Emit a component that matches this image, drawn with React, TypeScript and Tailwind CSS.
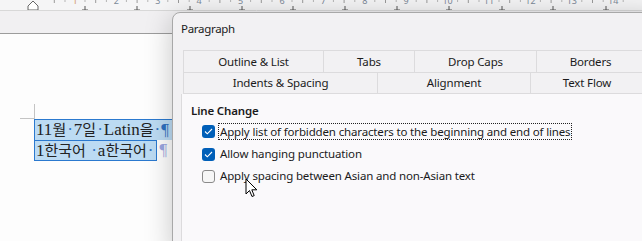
import React from 'react'

const ui = { fontFamily: '"Noto Sans", "Liberation Sans", sans-serif' }
const doc = { fontFamily: '"Liberation Serif", "Noto Sans CJK KR", serif' }

const Ruler = () => {
  const nums = [1, 2, 3, 4, 5, 6, 7, 8, 9, 10, 11, 12, 13, 14]
  const stops = [85, 137, 190, 242, 293, 345, 397, 449, 502, 553, 606]
  return (
    <svg width="642" height="11" className="block">
      <rect x="0" y="0" width="642" height="11" fill="#f5f5f6" />
      {nums.map((n, i) => {
        const x = 75 + i * 41.4
        return (
          <g key={n}>
            <text x={x} y="4" fontSize="9" textAnchor="middle" fill={i < 1 ? '#d39a62' : '#7d8a99'} style={ui}>{n}</text>
            <line x1={x - 20.7} y1="0" x2={x - 20.7} y2="3" stroke="#9a9a9a" />
            <line x1={x + 10} y1="0" x2={x + 10} y2="2" stroke="#b5b5b5" />
            <line x1={x - 10} y1="0" x2={x - 10} y2="2" stroke="#b5b5b5" />
          </g>
        )
      })}
      {stops.map(x => (
        <g key={x} stroke="#555">
          <line x1={x} y1="6" x2={x} y2="10" />
          <line x1={x - 3} y1="10" x2={x + 3} y2="10" />
        </g>
      ))}
      <path d="M28 10 L28 6 L33 1 L38 6 L38 10 Z" fill="#fff" stroke="#666" />
      <line x1="0" y1="10.5" x2="642" y2="10.5" stroke="#d8d8d8" />
    </svg>
  )
}

const Check = ({ on }: { on: boolean }) =>
  on ? (
    <div className="w-[13px] h-[13px] rounded-[3px] bg-[#005fb8] flex items-center justify-center shrink-0">
      <svg width="9" height="7" viewBox="0 0 9 7"><path d="M1 3.5 L3.3 5.8 L8 1" fill="none" stroke="#fff" strokeWidth="1.1" /></svg>
    </div>
  ) : (
    <div className="w-[13px] h-[13px] rounded-[3px] bg-[#f6f6f6] border border-[#8a8a8a] shrink-0" />
  )

const Dot = () => <span className="text-[#2e6fbf] mx-[1px]">·</span>

const App = () => {
  return (
    <div className="w-[642px] h-[241px] relative overflow-hidden bg-[#fdfdfd]" style={ui}>
      <Ruler />
      <div className="h-[23px] bg-[#f1f0f2] border-b border-[#9c9c9c]" />
      <div className="relative">
        <div className="ml-[20px] mt-[70px] w-[15px] h-[15px] border-r border-b border-[#c4c4c4]" />
        <div className="ml-[34px] text-[17px] leading-[20px] text-[#222]" style={doc}>
          <div className="flex">
            <span className="bg-[#bcdbf3] border border-[#2b79cf] border-b-0 pl-[1px] pr-[16px] h-[21px] whitespace-nowrap">11<span className="text-[15px]">월</span><Dot />7<span className="text-[15px]">일</span><Dot />Latin<span className="text-[15px]">을</span><Dot /><span className="text-[#2e6fbf]">¶</span></span>
          </div>
          <div className="flex items-start">
            <span className="bg-[#bcdbf3] border border-[#2b79cf] pl-[1px] pr-[2px] h-[21px] whitespace-nowrap">1<span className="text-[15px]">한국어</span> <Dot />a<span className="text-[15px]">한국어</span><Dot /></span>
            <span className="text-[#9aa6e0] ml-[2px]">¶</span>
          </div>
        </div>
      </div>

      <div className="absolute left-[172px] top-[12px] w-[490px] h-[240px] bg-[#f2f1f3] border border-[#a8a8a8] rounded-tl-[8px] shadow-[0_4px_28px_rgba(0,0,0,0.22)] text-[11.5px] tracking-[-0.15px] text-[#1b1b1b]">
        <div className="pl-[8px] pt-[7px] h-[37px] tracking-[-0.3px]">Paragraph</div>
        <div className="ml-[10px]">
          <div className="flex h-[22px] border-t border-l border-[#dcdbdd]">
            <div className="w-[140px] flex items-center justify-center border-r border-[#dcdbdd]">Outline &amp; List</div>
            <div className="w-[91px] flex items-center justify-center border-r border-[#dcdbdd]">Tabs</div>
            <div className="w-[122px] flex items-center justify-center border-r border-[#dcdbdd]">Drop Caps</div>
            <div className="w-[107px] flex items-center justify-center">Borders</div>
          </div>
          <div className="flex h-[22px] border-t border-l border-b border-[#dcdbdd]">
            <div className="w-[194px] flex items-center justify-center border-r border-[#dcdbdd]">Indents &amp; Spacing</div>
            <div className="w-[153px] flex items-center justify-center border-r border-[#dcdbdd]">Alignment</div>
            <div className="w-[112px] flex items-center justify-center">Text Flow</div>
          </div>
        </div>
        <div className="ml-[8px] h-[160px] bg-[#faf9fb] border-l border-[#dcdbdd] pl-[9px] pt-[8px]">
          <div className="font-semibold h-[18px] leading-[18px]">Line Change</div>
          <div className="pl-[11px] flex flex-col">
            <div className="flex items-center h-[23px] gap-[3px]">
              <Check on={true} />
              <span className="border border-dotted border-[#222] px-[1px] leading-[15px] whitespace-nowrap">Apply list of forbidden characters to the beginning and end of lines</span>
            </div>
            <div className="flex items-center h-[22px] gap-[5px]">
              <Check on={true} />
              <span>Allow hanging punctuation</span>
            </div>
            <div className="flex items-center h-[22px] gap-[5px]">
              <Check on={false} />
              <span>Apply spacing between Asian and non-Asian text</span>
            </div>
          </div>
        </div>
      </div>

      <svg className="absolute left-[245px] top-[178px]" width="14" height="21" viewBox="0 0 14 21">
        <path d="M1 1 L1 16 L4.5 12.5 L7 18.5 L9.2 17.6 L6.8 11.8 L11.8 11.8 Z" fill="#fff" stroke="#000" strokeWidth="1" strokeLinejoin="round" />
      </svg>
    </div>
  )
}

export default App
